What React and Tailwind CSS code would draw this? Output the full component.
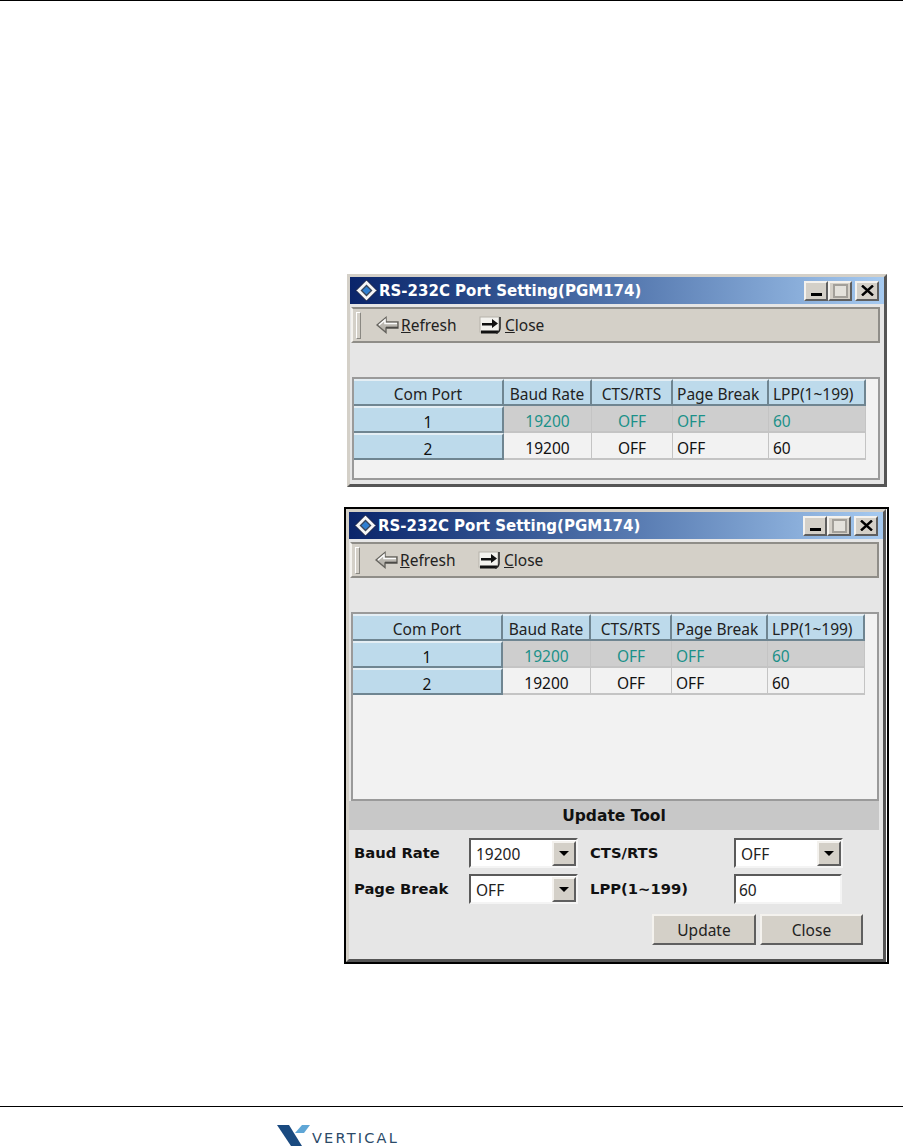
const columns = [
  { label: "Com Port", center: true },
  { label: "Baud Rate", center: true },
  { label: "CTS/RTS", center: true },
  { label: "Page Break", center: false },
  { label: "LPP(1~199)", center: false },
];

const rows = [
  { port: "1", values: ["19200", "OFF", "OFF", "60"], selected: true },
  { port: "2", values: ["19200", "OFF", "OFF", "60"], selected: false },
];

const raised = "border-2 border-t-[#f4f2ee] border-l-[#f4f2ee] border-r-[#5f5f5f] border-b-[#5f5f5f]";
const sunken = "border-2 border-t-[#5a5a5a] border-l-[#5a5a5a] border-r-[#f4f4f4] border-b-[#f4f4f4]";

const TitleIcon = () => (
  <svg width="23" height="23" viewBox="0 0 23 23" className="shrink-0">
    <path d="M11.500 1 L22 11.500 L11.500 22 L1 11.500 Z" fill="#f6f6f6" stroke="#10183a" strokeWidth="1" />
    <path d="M11.500 6.500 L16.500 11.500 L11.500 16.500 L6.500 11.500 Z" fill="#2f7fd0" stroke="#39465a" strokeWidth="1.400" />
  </svg>
);

const BackIcon = () => (
  <svg width="23" height="18" viewBox="0 0 23 18" className="shrink-0">
    <path d="M1 9 L10 1.500 V6 H22 V12 H10 V16.500 Z" fill="#b9b6af" stroke="#65635e" strokeWidth="1.400" />
    <path d="M3 9 L9 4 V7.500 H21" fill="none" stroke="#fbfbfb" strokeWidth="1.600" />
    <path d="M10 11.500 H22" stroke="#4c4b47" strokeWidth="1.600" />
  </svg>
);

const CloseIcon = () => (
  <svg width="24" height="20" viewBox="0 0 24 20" className="shrink-0">
    <rect x="1" y="2" width="19" height="15" fill="#f3f2ee" stroke="#b5b2aa" />
    <path d="M2 17 H19" stroke="#111" strokeWidth="3" />
    <path d="M3 8 H13 V4 L19 8.5 L13 13 V10.500 H3 Z" fill="#111" />
    <path d="M21 2 V13 Q21 17 17 18" fill="none" stroke="#222" strokeWidth="1.5" />
  </svg>
);

const WinButton = ({ children }) => (
  <div className={`flex h-5 w-6 items-center justify-center bg-[#d4d0c8] ${raised}`}>{children}</div>
);

const TitleBar = () => (
  <div className="flex h-[27px] items-center bg-linear-to-r from-[#0a246a] to-[#a6caf0] pr-[5px] pl-[5px]">
    <TitleIcon />
    <span className="ml-px flex-1 pt-px font-['DejaVu_Sans'] text-[15px] font-bold whitespace-nowrap text-white">
      RS-232C Port Setting(PGM174)
    </span>
    <WinButton>
      <div className="mt-[8px] h-[3px] w-[11px] bg-black" />
    </WinButton>
    <WinButton>
      <div className="h-[14px] w-[15px] border-2 border-[#a3a09a] bg-[#e4e2dc]" />
    </WinButton>
    <div className="ml-[3px]">
      <WinButton>
        <svg width="13" height="11" viewBox="0 0 13 11">
          <path d="M1 0.500 L12 10.500 M12 0.500 L1 10.500" stroke="#000" strokeWidth="2.400" />
        </svg>
      </WinButton>
    </div>
  </div>
);

const Toolbar = () => (
  <div className="mt-[3px] mr-[4px] ml-px flex h-9 items-center border-2 border-t-[#8f8d88] border-r-[#8f8d88] border-b-[#8f8d88] border-l-[#f4f2ee] bg-[#d4d0c8] font-['Noto_Sans'] text-[15.5px] text-[#222]">
    <div className="ml-[3px] h-[27px] w-[5px] border border-t-white border-r-[#8a8882] border-b-[#8a8882] border-l-white" />
    <div className="ml-[15px]"><BackIcon /></div>
    <span className="ml-[2px] w-[78px] pt-[2px]"><span className="underline">R</span>efresh</span>
    <CloseIcon />
    <span className="ml-[2px] pt-[2px]"><span className="underline">C</span>lose</span>
  </div>
);

const GridTable = () => (
  <div className="grid w-[512px] grid-cols-[150px_88px_81px_96px_97px] font-['Noto_Sans'] text-[15.5px]">
    {columns.map((col) => (
      <div
        key={col.label}
        className={`flex h-[27px] items-center border-t-2 border-r-2 border-b-2 border-t-[#e4eef4] border-r-[#6f8591] border-b-[#6f8591] bg-[#bddaeb] pt-[4px] text-[#222] ${col.center ? "justify-center" : "pl-[4px]"}`}
      >
        {col.label}
      </div>
    ))}
    {rows.map((row) => (
      <div key={row.port} className="contents">
        <div className="flex h-[27px] items-center justify-center border-t-2 border-r-2 border-b-2 border-t-[#e4eef4] border-r-[#6f8591] border-b-[#6f8591] bg-[#bddaeb] pt-[6px] text-[#111]">
          {row.port}
        </div>
        {row.values.map((value, i) => (
          <div
            key={i}
            className={`flex h-[27px] items-center border-r border-b-2 border-r-[#c4c4c4] border-b-[#c4c4c4] pt-[6px] ${row.selected ? "bg-[#cecece] text-[#1b9189]" : "bg-[#f2f2f2] text-[#111]"} ${i < 2 ? "justify-center" : "pl-[4px]"}`}
          >
            {value}
          </div>
        ))}
      </div>
    ))}
  </div>
);

const Dropdown = ({ value, width }) => (
  <div className={`flex h-[30px] items-center bg-white pl-[5px] font-['Noto_Sans'] text-[15.5px] font-normal text-[#222] ${sunken} ${width}`}>
    <span className="flex-1 pt-[3px]">{value}</span>
    <div className={`flex h-[25px] w-[24px] items-center justify-center bg-[#d4d0c8] ${raised}`}>
      <div className="h-0 w-0 border-x-[5px] border-t-[5px] border-x-transparent border-t-black" />
    </div>
  </div>
);

const UpdateTool = () => (
  <>
    <div className="mr-[4px] flex h-[29px] items-center justify-center bg-[#c8c8c8] pt-[3px] font-['DejaVu_Sans'] text-[15.5px] font-bold text-[#111]">
      Update Tool
    </div>
    <div className="flex flex-col pt-[8px] pl-[5px] font-['DejaVu_Sans'] text-[14.75px] font-bold text-[#111]">
      <div className="flex items-center">
        <span className="w-[115px]">Baud Rate</span>
        <Dropdown value="19200" width="w-[109px]" />
        <span className="ml-[12px] w-[144px]">CTS/RTS</span>
        <Dropdown value="OFF" width="w-[109px]" />
      </div>
      <div className="mt-[6px] flex items-center">
        <span className="w-[115px]">Page Break</span>
        <Dropdown value="OFF" width="w-[109px]" />
        <span className="ml-[12px] w-[144px]">LPP(1~199)</span>
        <div className={`flex h-[30px] w-[108px] items-center bg-white pt-[3px] pl-[3px] font-['Noto_Sans'] text-[15.5px] font-normal text-[#222] ${sunken}`}>
          60
        </div>
      </div>
      <div className="mt-[10px] mr-[20px] flex justify-end gap-[4px] font-['Noto_Sans'] text-[15.5px] font-normal text-[#222]">
        <div className={`flex h-[31px] w-[104px] items-center justify-center bg-[#d4d0c8] pt-[3px] ${raised}`}>Update</div>
        <div className={`flex h-[31px] w-[103px] items-center justify-center bg-[#d4d0c8] pt-[3px] ${raised}`}>Close</div>
      </div>
    </div>
  </>
);

const PortWindow = ({ panelHeight, height, children }) => (
  <div className={`flex w-[540px] flex-col border-[3px] border-t-[#d4d0c8] border-r-[#555] border-b-[#555] border-l-[#d4d0c8] bg-[#e6e6e6] ${height}`}>
    <TitleBar />
    <Toolbar />
    <div className={`mt-[34px] mr-[4px] ml-[2px] border-2 border-[#9a9a9a] bg-[#f2f2f2] ${panelHeight}`}>
      <GridTable />
    </div>
    {children}
  </div>
);

export default function App() {
  return (
    <div className="flex h-[1146px] w-[903px] flex-col bg-white">
      <div className="h-px bg-black" />
      <div className="mt-[273px] ml-[347px]">
        <PortWindow panelHeight="h-[103px]" height="h-[213px]" />
      </div>
      <div className="mt-[20px] ml-[344px] w-[545px] border-2 border-black">
        <PortWindow panelHeight="h-[189px]" height="h-[453px]">
          <UpdateTool />
        </PortWindow>
      </div>
      <div className="mt-auto flex h-[40px] border-t border-black pt-[18px] pl-[277px]">
        <svg width="33" height="21" viewBox="0 0 33 21" className="shrink-0">
          <path d="M0 0 H12 L25 21 H14 Z" fill="#1a4a80" />
          <path d="M18 8 L25 0 H33 L27 8 Z" fill="#5fa6d6" />
        </svg>
        <span className="mt-[3px] ml-[2px] font-['DejaVu_Sans'] text-[14.5px] leading-[20px] tracking-[2.2px] whitespace-nowrap text-[#2b4a68]">
          VERTICAL
        </span>
      </div>
    </div>
  );
}
